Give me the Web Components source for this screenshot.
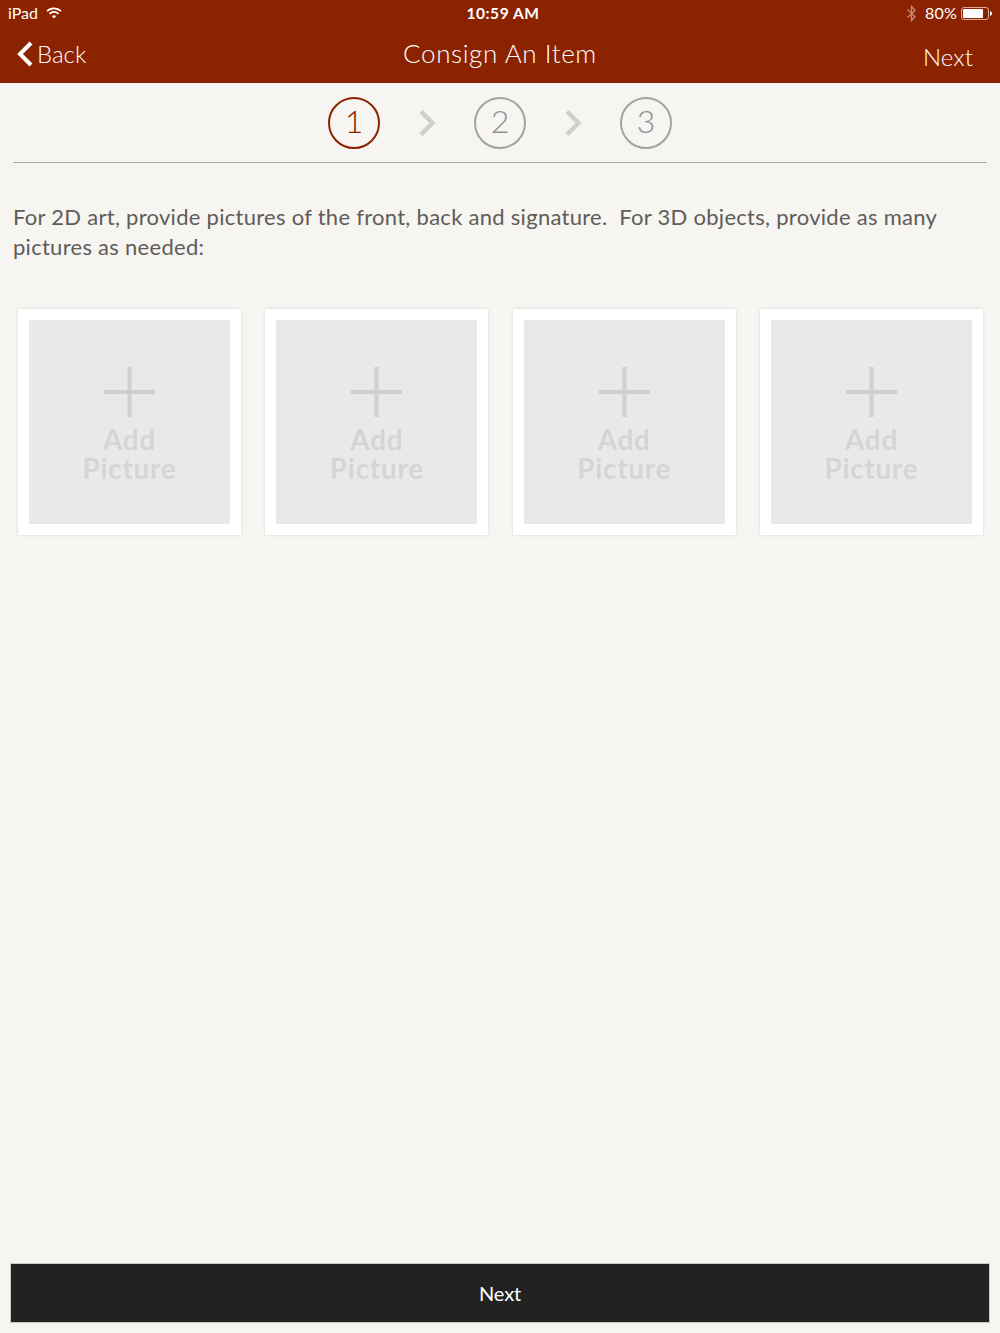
<!DOCTYPE html>
<html>
<head>
<meta charset="utf-8">
<style>
  html, body { margin: 0; padding: 0; height: 100%; }
  body { background: #f6f5f1; font-family: Lato, "Open Sans", sans-serif; }
  app-screen { height: 1333px; }
</style>
</head>
<body>
<app-screen>
  <status-bar></status-bar>
  <nav-bar title="Consign An Item"></nav-bar>
  <step-row></step-row>
  <p class="intro" slot="intro">For 2D art, provide pictures of the front, back and signature.&nbsp; For 3D objects, provide as many pictures as needed:</p>
  <picture-grid slot="grid">
    <add-picture></add-picture>
    <add-picture></add-picture>
    <add-picture></add-picture>
    <add-picture></add-picture>
  </picture-grid>
  <next-button slot="footer">Next</next-button>
</app-screen>

<script>
class AppScreen extends HTMLElement {
  connectedCallback() {
    this.attachShadow({ mode: 'open' });
    this.shadowRoot.innerHTML = `
      <style>
        :host { display: flex; flex-direction: column; }
        .intro { padding: 39px 13px 0; height: 62px; font-size: 22px; line-height: 30px; letter-spacing: .28px; color: #5f5c59; }
        ::slotted(p) { margin: 0; }
        .grid { padding: 45px 17px 0 18px; flex: 1; }
        .footer { padding: 0 11px 11px; }
      </style>
      <slot></slot>
      <div class="intro"><slot name="intro"></slot></div>
      <div class="grid"><slot name="grid"></slot></div>
      <div class="footer"><slot name="footer"></slot></div>
    `;
  }
}

class StatusBar extends HTMLElement {
  connectedCallback() {
    this.attachShadow({ mode: 'open' });
    this.shadowRoot.innerHTML = `
      <style>
        :host { display: grid; grid-template-columns: 1fr auto 1fr; align-items: center; height: 27px; background: #8b2300; color: #fff; font-size: 16px; line-height: 26px; padding: 0 7px 1px 8px; box-sizing: border-box; }
        .left { display: flex; align-items: center; gap: 8px; }
        .time { font-weight: 700; font-size: 15.5px; letter-spacing: .55px; padding-left: 5px; }
        .right { display: flex; align-items: center; justify-content: flex-end; }
        .bt { margin-right: 8px; }
        .pct { margin-right: 4px; letter-spacing: .2px; }
      </style>
      <div class="left">
        <span>iPad</span>
        <svg width="16" height="12" viewBox="0 0 16 12" fill="none" stroke="#fff" stroke-width="1.7">
          <path d="M1 4.2a10 10 0 0 1 14 0"/>
          <path d="M3.5 6.8a6.4 6.4 0 0 1 9 0"/>
          <path d="M8 11.5 5.8 9.2a3.2 3.2 0 0 1 4.4 0z" fill="#fff" stroke="none"/>
        </svg>
      </div>
      <div class="time">10:59 AM</div>
      <div class="right">
        <svg class="bt" width="11" height="17" viewBox="0 0 11 17" fill="none" stroke="#c08a75" stroke-width="1.4">
          <path d="M1.5 4.5 9 11.5 5.5 15.5V1.5L9 5.5 1.5 12.5"/>
        </svg>
        <span class="pct">80%</span>
        <svg width="32" height="13" viewBox="0 0 32 13">
          <rect x=".5" y=".5" width="27" height="12" rx="2.5" fill="none" stroke="#d9a896"/>
          <rect x="2" y="2" width="20" height="9" rx="1" fill="#fff"/>
          <path d="M29 4.2c1.4.3 2 1.2 2 2.3s-.6 2-2 2.3z" fill="#fff"/>
        </svg>
      </div>
    `;
  }
}

class NavBar extends HTMLElement {
  connectedCallback() {
    this.attachShadow({ mode: 'open' });
    this.shadowRoot.innerHTML = `
      <style>
        :host { display: grid; grid-template-columns: 1fr auto 1fr; align-items: center; height: 56px; background: #8b2300; color: #fff; font-size: 24px; font-weight: 300; padding: 0 27px 4px 17px; box-sizing: border-box; }
        .back { display: flex; align-items: center; gap: 4px; }
        .back svg { position: relative; top: 1px; }
        .title { letter-spacing: .6px; font-size: 26px; padding-left: 10px; }
        .next { text-align: right; padding-top: 7px; letter-spacing: .1px; }
      </style>
      <div class="back">
        <svg width="16" height="26" viewBox="0 0 16 26" fill="none" stroke="#fff" stroke-width="4">
          <path d="M14 2 3 13l11 11"/>
        </svg>
        <span>Back</span>
      </div>
      <div class="title">${this.getAttribute('title')}</div>
      <div class="next">Next</div>
    `;
  }
}

class StepRow extends HTMLElement {
  connectedCallback() {
    const chevron = `
      <svg width="18" height="28" viewBox="0 0 18 28" fill="none" stroke="#cfcfcd" stroke-width="4.5">
        <path d="M3 2.5 14.5 14 3 25.5"/>
      </svg>`;
    this.attachShadow({ mode: 'open' });
    this.shadowRoot.innerHTML = `
      <style>
        :host { display: flex; justify-content: center; align-items: center; gap: 38px; height: 80px; margin: 0 13px; border-bottom: 1px solid #a9a9a6; box-sizing: border-box; }
        .step { width: 52px; height: 52px; box-sizing: border-box; border: 2px solid #a3a3a1; border-radius: 50%; display: flex; align-items: center; justify-content: center; padding-bottom: 5px; font-size: 32px; font-weight: 300; color: #8f8f8d; }
        .on { border-color: #8b2300; color: #8b2300; }
      </style>
      <div class="step on">1</div>
      ${chevron}
      <div class="step">2</div>
      ${chevron}
      <div class="step">3</div>
    `;
  }
}

class PictureGrid extends HTMLElement {
  connectedCallback() {
    this.attachShadow({ mode: 'open' });
    this.shadowRoot.innerHTML = `
      <style>
        :host { display: grid; grid-template-columns: repeat(4, 223px); justify-content: space-between; }
      </style>
      <slot></slot>
    `;
  }
}

class AddPicture extends HTMLElement {
  connectedCallback() {
    this.attachShadow({ mode: 'open' });
    this.shadowRoot.innerHTML = `
      <style>
        :host { display: block; box-sizing: border-box; width: 223px; height: 226px; padding: 11px; background: #fff; box-shadow: 0 0 3px rgba(0,0,0,.12); }
        .inner { height: 204px; background: #e9e9e9; display: flex; flex-direction: column; align-items: center; padding-top: 47px; box-sizing: border-box; color: #d5d5d5; font-size: 28px; font-weight: 700; letter-spacing: .7px; line-height: 29px; text-align: center; filter: blur(.5px); }
        svg { margin-bottom: 8px; }
      </style>
      <div class="inner">
        <svg width="51" height="50" viewBox="0 0 51 50" fill="#cfcfcf">
          <rect x="23.5" y="0" width="4" height="50"/>
          <rect x="0" y="23" width="51" height="4"/>
        </svg>
        <div>Add<br>Picture</div>
      </div>
    `;
  }
}

class NextButton extends HTMLElement {
  connectedCallback() {
    this.attachShadow({ mode: 'open' });
    this.shadowRoot.innerHTML = `
      <style>
        :host { display: flex; align-items: center; justify-content: center; height: 58px; background: #222; color: #fff; font-size: 20px; letter-spacing: -.1px; box-shadow: 0 0 0 1px #c9c8c4; padding-bottom: 1px; box-sizing: border-box; }
      </style>
      <slot></slot>
    `;
  }
}

customElements.define('app-screen', AppScreen);
customElements.define('status-bar', StatusBar);
customElements.define('nav-bar', NavBar);
customElements.define('step-row', StepRow);
customElements.define('picture-grid', PictureGrid);
customElements.define('add-picture', AddPicture);
customElements.define('next-button', NextButton);
</script>
</body>
</html>
